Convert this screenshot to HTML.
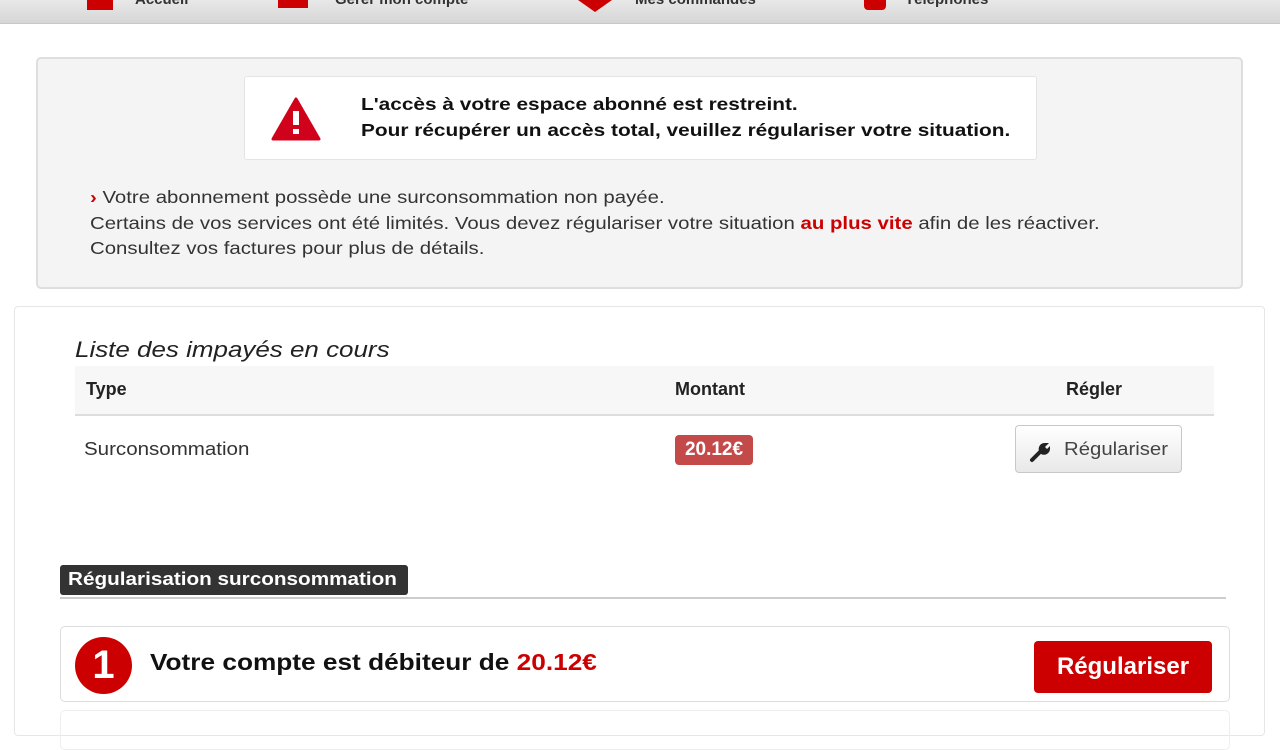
<!DOCTYPE html>
<html><head><meta charset="utf-8"><style>
*{box-sizing:border-box;margin:0;padding:0}
body{width:1280px;height:720px;overflow:hidden;background:#fff;font-family:"Liberation Sans",Arial,sans-serif;color:#222;position:relative}
.sx{display:inline-block;transform-origin:0 50%;white-space:nowrap}
.nav{position:absolute;left:0;top:0;width:1280px;height:24px;background:linear-gradient(#e8e8e8,#d6d6d6);border-bottom:1px solid #c8c8c8}
.nav span{position:absolute;top:-9px;font-size:15px;font-weight:bold;color:#333}
.nav i{position:absolute;background:#c00;top:0}
.alert{position:absolute;left:36px;top:57px;width:1207px;height:232px;background:#f4f4f4;border:2px solid #dedede;border-radius:5px}
.inner{position:absolute;left:206px;top:17px;width:793px;height:84px;background:#fff;border:1px solid #e4e4e4;border-radius:3px}
.inner p{position:absolute;left:116px;top:14px;font-size:17.5px;font-weight:bold;line-height:26px;color:#111}
.msg{position:absolute;left:52px;top:126px;font-size:17.5px;line-height:25.5px;color:#333}
.msg b{color:#c00}
.card{position:absolute;left:14px;top:306px;width:1251px;height:430px;border:1px solid #e6e6e6;border-radius:4px;background:#fff}
.title{position:absolute;left:60px;top:30px;font-style:italic;font-size:22px;color:#222}
.thead{position:absolute;left:60px;top:59px;width:1139px;height:50px;background:#f7f7f7;border-bottom:2px solid #ddd;font-weight:bold;font-size:18px}
.thead span{position:absolute;top:13px}
.row{position:absolute;left:60px;top:111px;width:1139px;height:60px;font-size:18px;color:#333}
.badge{position:absolute;left:600px;top:17px;background:#c44a4a;color:#fff;font-weight:bold;width:78px;height:30px;line-height:30px;text-align:center;border-radius:4px;font-size:19px}
.btn{position:absolute;left:940px;top:7px;width:167px;height:48px;border:1px solid #c8c8c8;border-radius:4px;background:linear-gradient(#fff,#e8e8e8);font-size:18px;color:#444}
.sec{position:absolute;left:45px;top:258px;width:348px;height:30px;line-height:28px;background:#333;color:#fff;font-weight:bold;font-size:18px;padding:0 8px;border-radius:3px}
.line{position:absolute;left:45px;top:290px;width:1166px;height:2px;background:#ccc}
.step{position:absolute;left:45px;top:319px;width:1170px;height:76px;border:1px solid #ddd;border-radius:5px}
.num{position:absolute;left:14px;top:10px;width:57px;height:57px;border-radius:50%;background:#c00;color:#fff;font-size:40px;font-weight:bold;text-align:center;line-height:57px}
.st{position:absolute;left:89px;top:22px;font-size:23px;font-weight:bold;color:#111}
.st b{color:#c00}
.rbtn{position:absolute;left:973px;top:14px;width:178px;height:52px;background:#cc0000;border-radius:4px;color:#fff;font-size:24px;font-weight:bold;text-align:center;line-height:52px}
.step2{position:absolute;left:45px;top:403px;width:1170px;height:40px;border:1px solid #eee;border-radius:5px}
</style></head><body>
<div class="nav">
<i style="left:87px;width:26px;height:10px"></i><span style="left:135px">Accueil</span>
<i style="left:278px;width:30px;height:8px"></i><span style="left:335px">Gérer mon compte</span>
<i style="left:578px;width:34px;clip-path:polygon(0 0,100% 0,50% 100%);height:12px"></i><span style="left:635px">Mes commandes</span>
<i style="left:864px;width:22px;height:10px;border-radius:0 0 4px 4px"></i><span style="left:905px">Téléphones</span>
</div>
<div class="alert">
<div class="inner">
<svg style="position:absolute;left:26px;top:20px" width="50" height="44" viewBox="0 0 50 44"><path d="M25 2 L48 42 H2 Z" fill="#d0021b" stroke="#d0021b" stroke-width="3" stroke-linejoin="round"/><rect x="22" y="14" width="6" height="14" fill="#fff"/><rect x="22" y="32" width="6" height="5" fill="#fff"/></svg>
<p><span class="sx" style="transform:scaleX(1.19)">L'accès à votre espace abonné est restreint.</span><br><span class="sx" style="transform:scaleX(1.19)">Pour récupérer un accès total, veuillez régulariser votre situation.</span></p>
</div>
<div class="msg"><span class="sx" style="transform:scaleX(1.165)"><b>›</b> Votre abonnement possède une surconsommation non payée.</span><br><span class="sx" style="transform:scaleX(1.165)">Certains de vos services ont été limités. Vous devez régulariser votre situation <b>au plus vite</b> afin de les réactiver.</span><br><span class="sx" style="transform:scaleX(1.165)">Consultez vos factures pour plus de détails.</span></div>
</div>
<div class="card">
<div class="title"><span class="sx" style="transform:scaleX(1.18)">Liste des impayés en cours</span></div>
<div class="thead"><span style="left:11px">Type</span><span style="left:600px">Montant</span><span style="left:991px">Régler</span></div>
<div class="row"><div style="position:absolute;left:9px;top:21px;line-height:20px"><span class="sx" style="transform:scaleX(1.14)">Surconsommation</span></div><div class="badge">20.12€</div>
<div class="btn"><svg style="position:absolute;left:13px;top:13px" width="24" height="24" viewBox="0 0 24 24"><path d="M3 21 L12 12" stroke="#222" stroke-width="4" stroke-linecap="round"/><path d="M10 12 A6 6 0 0 1 16 4 L20 4 L16 8 L18 10 L21 7 L21 10 A6 6 0 0 1 12 15 Z" fill="#222"/></svg><div style="position:absolute;left:48px;top:13px;line-height:20px"><span class="sx" style="transform:scaleX(1.13)">Régulariser</span></div></div></div>
<div class="sec"><span class="sx" style="transform:scaleX(1.15)">Régularisation surconsommation</span></div>
<div class="line"></div>
<div class="step"><div class="num">1</div><div class="st"><span class="sx" style="transform:scaleX(1.14)">Votre compte est débiteur de <b>20.12€</b></span></div><div class="rbtn">Régulariser</div></div>
<div class="step2"></div>
</div>
</body></html>
